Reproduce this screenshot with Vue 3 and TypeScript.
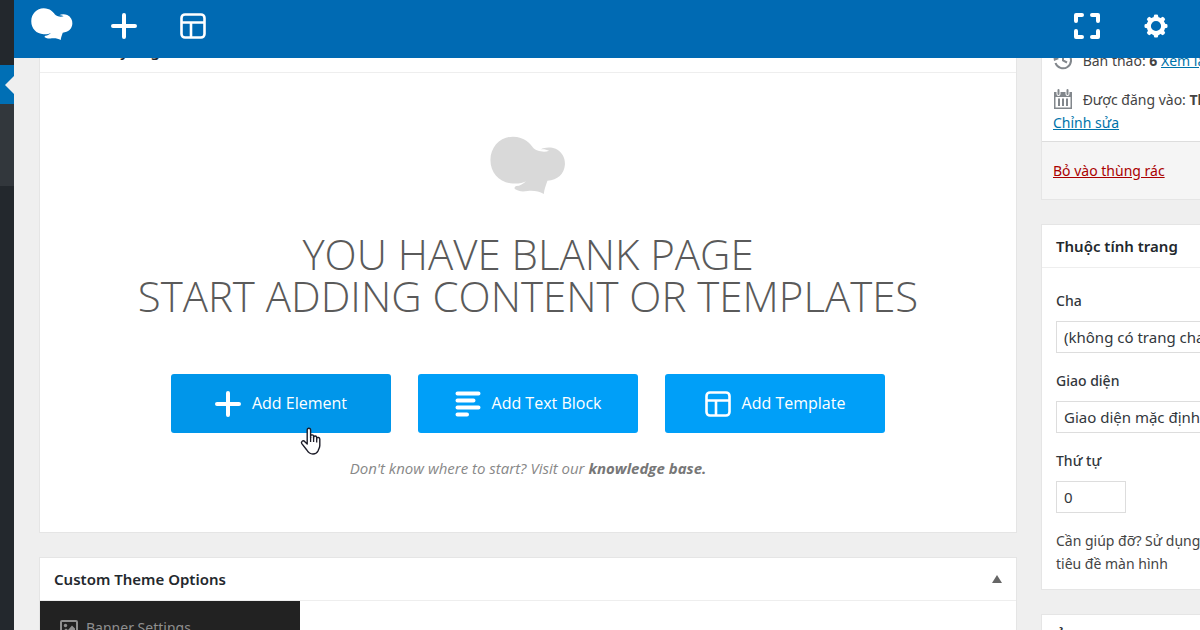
<script setup lang="ts">
import { ref } from 'vue'

const parent = ref('none')
const template = ref('default')
const order = ref('0')

const logoPath =
  'M160 47C196 47 213 68 221 80C230 91 254 96 270 90C262 86 252 84 244 86C256 79 275 78 290 84C310 94 319 112 318 132C316 160 296 178 265 181C260 195 255 208 254 221C240 214 225 210 205 212C190 214 178 214 166 206C164 202 166 199 170 197C182 196 192 190 200 182C190 187 178 190 160 189C120 188 92 158 92 118C92 78 122 47 160 47Z'
const teeth = [0, 45, 90, 135, 180, 225, 270, 315]
</script>

<template>
  <div class="app">
    <nav class="rail" aria-label="Admin menu">
      <a class="rail-current" href="#" aria-label="Current section"></a>
      <div class="rail-sub"></div>
    </nav>

    <div class="page">
      <header class="topbar">
        <a class="brand" href="#" aria-label="WPBakery">
          <svg viewBox="92 45 228 176" width="42" height="32"><path :d="logoPath" fill="#fff" /></svg>
        </a>
        <button class="tool" type="button" aria-label="Add element">
          <svg viewBox="0 0 26 26" width="26" height="26"><path d="M13 2v22M2 13h22" class="thick" /></svg>
        </button>
        <button class="tool" type="button" aria-label="Templates">
          <svg viewBox="0 0 26 26" width="26" height="26">
            <rect x="1.5" y="1.5" width="23" height="23" rx="3.5" class="line" />
            <path d="M2 9.5h22M11 10v14" class="line" />
          </svg>
        </button>
        <span class="spacer"></span>
        <button class="tool" type="button" aria-label="Full screen">
          <svg viewBox="0 0 26 26" width="26" height="26">
            <path d="M2 8V2H8M18 2H24V8M24 18V24H18M8 24H2V18" class="corner" />
          </svg>
        </button>
        <button class="tool" type="button" aria-label="Settings">
          <svg viewBox="0 0 26 26" width="26" height="26">
            <circle cx="13" cy="13" r="7.2" fill="none" stroke="#fff" stroke-width="4.2" />
            <path
              v-for="a in teeth"
              :key="a"
              d="M10.4 5L11.2 1.8Q13 1 14.8 1.8L15.6 5Z"
              fill="#fff"
              :transform="`rotate(${a} 13 13)`"
            />
          </svg>
        </button>
      </header>

      <div class="content">
        <main class="column">
          <section class="card">
            <h2 class="card-title">WPBakery Page Builder</h2>
            <div class="welcome">
              <svg class="mark" viewBox="92 45 228 176" width="76" height="58"><path :d="logoPath" fill="#d9d9d9" /></svg>
              <h1>YOU HAVE BLANK PAGE<br />START ADDING CONTENT OR TEMPLATES</h1>
              <div class="actions">
                <button class="action hovered" type="button">
                  <svg viewBox="0 0 26 26" width="26" height="26"><path d="M13 2v22M2 13h22" class="thick" /></svg>
                  Add Element
                  <svg class="cursor" viewBox="0 0 22 28" width="22" height="28">
                    <path
                      d="M7.2 17V3.2C7.2 .6 10.6 .6 10.6 3.2V10.5V8.8C11.2 7.4 13.4 7.7 13.6 9.2V11V9.8C14.3 8.5 16.4 8.8 16.7 10.3V12V11C17.5 9.9 19.7 10.3 19.8 12V18.5C19.8 21 18.4 22.4 18 24C17 26 15.5 27 13 27C9.5 27 8.2 25.4 6.8 23L1.8 16.6C.6 14.6 3 13 4.6 14.4Z"
                      fill="#fff"
                      stroke="#1c1c28"
                      stroke-width="1.4"
                      stroke-linejoin="round"
                    />
                    <path d="M10.6 10v5M13.6 10.5v4.5M16.7 11.5v4" stroke="#1c1c28" stroke-width="1.3" />
                  </svg>
                </button>
                <button class="action" type="button">
                  <svg viewBox="0 0 26 26" width="26" height="26">
                    <path d="M2.5 2.5H23.5M2.5 9.5H18.5M2.5 16.5H23.5M2.5 23.5H12" class="thick" />
                  </svg>
                  Add Text Block
                </button>
                <button class="action" type="button">
                  <svg viewBox="0 0 26 26" width="26" height="26">
                    <rect x="1.5" y="1.5" width="23" height="23" rx="3.5" class="line" />
                    <path d="M2 9.5h22M11 10v14" class="line" />
                  </svg>
                  Add Template
                </button>
              </div>
              <p class="hint">Don't know where to start? Visit our <a href="#">knowledge base.</a></p>
            </div>
          </section>

          <section class="card">
            <div class="card-title">
              <h2>Custom Theme Options</h2>
              <button class="toggle" type="button" aria-label="Toggle panel"></button>
            </div>
            <div class="theme-menu">
              <a href="#">
                <svg viewBox="0 0 18 16" width="18" height="16">
                  <rect x="1" y="1" width="16" height="14" rx="1" fill="none" stroke="#8f8f8f" stroke-width="2" />
                  <circle cx="5.5" cy="5.5" r="1.7" fill="#8f8f8f" />
                  <path d="M3 13V11L6 8.5L8 10L12 5.5L15 8.5V13Z" fill="#8f8f8f" />
                </svg>
                Banner Settings
              </a>
            </div>
          </section>
        </main>

        <aside class="side">
          <section class="card publish">
            <div class="publish-body">
              <p>
                <svg viewBox="0 0 20 20" width="20" height="20">
                  <path d="M3 6.5A8 8 0 1 1 2.5 13" class="grey" />
                  <path d="M10 5V10.5L14 12.5" class="grey" />
                  <path d="M0 4L6 9L1 11Z" fill="#82878c" />
                </svg>
                Bản thảo: <b>6</b> <a href="#">Xem lại</a>
              </p>
              <p class="date">
                <svg viewBox="0 0 20 20" width="20" height="20">
                  <path d="M1 3H19V20H1Z" fill="#82878c" />
                  <path d="M2.5 8H17.5V18.5H2.5Z" fill="#fff" />
                  <path d="M6 9.5V17M10 9.5V17M14 9.5V17" stroke="#82878c" stroke-width="2" />
                  <path d="M5.5 1V5M14.5 1V5" stroke="#fff" stroke-width="4" stroke-linecap="round" />
                  <path d="M5.5 1V5M14.5 1V5" stroke="#82878c" stroke-width="2" stroke-linecap="round" />
                </svg>
                Được đăng vào: <b>Tháng Mười</b><br />
                <a href="#">Chỉnh sửa</a>
              </p>
            </div>
            <div class="publish-footer"><a href="#">Bỏ vào thùng rác</a></div>
          </section>

          <section class="card attributes">
            <h2 class="card-title">Thuộc tính trang</h2>
            <div class="fields">
              <label for="parent">Cha</label>
              <select id="parent" v-model="parent">
                <option value="none">(không có trang cha)</option>
              </select>
              <label for="template">Giao diện</label>
              <select id="template" v-model="template">
                <option value="default">Giao diện mặc định</option>
              </select>
              <label for="order">Thứ tự</label>
              <input id="order" v-model="order" type="text" />
              <p>Cần giúp đỡ? Sử dụng thẻ<br />tiêu đề màn hình</p>
            </div>
          </section>

          <section class="card">
            <h2 class="card-title">Ảnh đại diện</h2>
          </section>
        </aside>
      </div>
    </div>
  </div>
</template>

<style>
body {
  background: #efefef;
  overflow: hidden;
}
</style>

<style scoped>
* {
  box-sizing: border-box;
}
.app {
  display: flex;
  height: 100vh;
  overflow: hidden;
  background: #efefef;
  color: #444;
  font: 14px/23px 'Noto Sans', 'Open Sans', sans-serif;
}
h1,
h2,
p {
  margin: 0;
}
svg {
  flex: none;
  overflow: visible;
}
button {
  border: 0;
  padding: 0;
  font: inherit;
  cursor: pointer;
}
.rail {
  flex: none;
  width: 14px;
  padding-top: 65px;
  background: #23282d;
}
.rail-current {
  display: flex;
  align-items: center;
  justify-content: flex-end;
  height: 39px;
  background: #006fb5;
}
.rail-current::after {
  content: '';
  border: 9px solid transparent;
  border-left: 0;
  border-right-color: #efefef;
}
.rail-sub {
  height: 82px;
  background: #32373c;
}
.page {
  flex: 1;
  min-width: 0;
}
.topbar {
  position: relative;
  z-index: 1;
  display: flex;
  align-items: center;
  height: 58px;
  padding: 0 10px 6px 17px;
  background: #006ab3;
}
.brand {
  display: flex;
  margin-right: 16px;
  padding-bottom: 4px;
}
.tool {
  display: flex;
  align-items: center;
  justify-content: center;
  width: 69px;
  height: 52px;
  background: none;
}
.spacer {
  flex: 1;
}
.thick {
  fill: none;
  stroke: #fff;
  stroke-width: 4;
  stroke-linecap: round;
}
.line {
  fill: none;
  stroke: #fff;
  stroke-width: 2.6;
}
.corner {
  fill: none;
  stroke: #fff;
  stroke-width: 4;
  stroke-linecap: round;
  stroke-linejoin: round;
}
.grey {
  fill: none;
  stroke: #82878c;
  stroke-width: 2;
}
.content {
  display: grid;
  grid-template-columns: minmax(0, 1fr) 159px;
  gap: 24px;
  margin-top: -29px;
  padding-left: 25px;
}
.column,
.side {
  display: flex;
  flex-direction: column;
  gap: 24px;
}
.side .card {
  width: 320px;
}
.card {
  border: 1px solid #e5e5e5;
  background: #fff;
}
.card-title {
  display: flex;
  align-items: center;
  justify-content: space-between;
  height: 43px;
  padding: 0 14px;
  border-bottom: 1px solid #eee;
  color: #23282d;
  font-size: 15px;
  font-weight: 600;
}
.card-title h2 {
  font: inherit;
}
.toggle {
  width: 10px;
  height: 8px;
  background: #666;
  clip-path: polygon(50% 0, 100% 100%, 0 100%);
}
.welcome {
  display: flex;
  flex-direction: column;
  align-items: center;
  padding: 63px 16px 53px;
  font-family: 'Open Sans', 'Noto Sans', sans-serif;
}
h1 {
  margin: 39px 0 57px;
  color: #5a5a5a;
  font-size: 42px;
  font-weight: 300;
  line-height: 42px;
  text-align: center;
}
.actions {
  display: flex;
  gap: 27px;
}
.action {
  position: relative;
  display: flex;
  align-items: center;
  justify-content: center;
  gap: 11px;
  width: 220px;
  height: 59px;
  border-radius: 3px;
  background: #009ff8;
  color: #fff;
  font-size: 16px;
}
.hovered {
  background: #0096ea;
}
.cursor {
  position: absolute;
  left: 129px;
  top: 53px;
}
.hint {
  margin-top: 24px;
  color: #888;
  font-size: 15px;
  font-style: italic;
  line-height: 22px;
}
.hint a {
  color: #777;
  font-weight: 700;
  text-decoration: none;
}
.theme-menu {
  width: 260px;
  height: 120px;
  padding: 15px 20px;
  background: #222;
}
.theme-menu a {
  display: flex;
  align-items: center;
  gap: 8px;
  color: #8f8f8f;
  text-decoration: none;
}
.publish-body {
  padding: 19px 11px 7px;
  white-space: nowrap;
}
.publish-body svg {
  margin-right: 6px;
  vertical-align: -4px;
}
.publish-body a {
  color: #0073aa;
}
.date {
  margin-top: 16px;
}
.publish-footer {
  padding: 17px 11px;
  border-top: 1px solid #ddd;
  background: #f5f5f5;
}
.publish-footer a {
  color: #a00;
}
.fields {
  display: flex;
  flex-direction: column;
  align-items: flex-start;
  padding: 21px 14px 14px;
}
.fields label {
  margin-bottom: 9px;
  color: #32373c;
  font-weight: 500;
}
.fields select,
.fields input {
  appearance: none;
  width: 100%;
  height: 32px;
  margin-bottom: 16px;
  padding: 0 7px;
  border: 1px solid #ddd;
  border-radius: 0;
  background: #fff;
  color: #32373c;
  font: inherit;
  font-size: 15px;
}
.fields input {
  width: 70px;
}
</style>
